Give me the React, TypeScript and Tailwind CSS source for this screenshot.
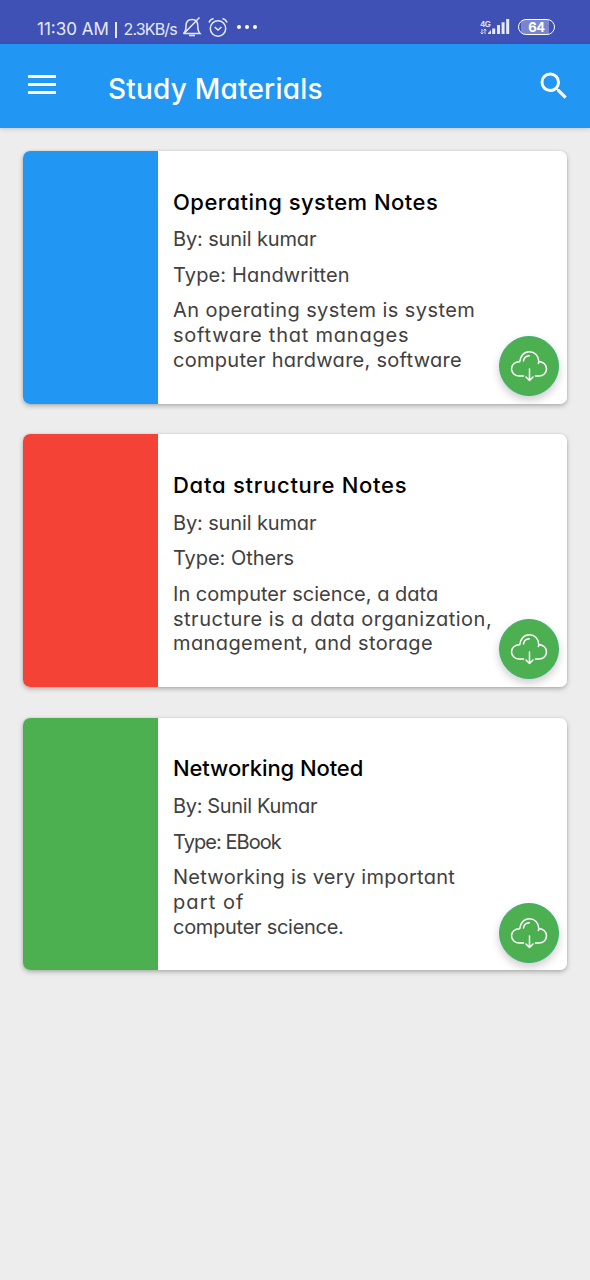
type Line = { text: string; tracking: string };

type Note = {
  title: Line;
  author: Line;
  kind: Line;
  description: Line[];
  color: string;
};

const notes: Note[] = [
  {
    title: { text: 'Operating system Notes', tracking: 'tracking-[0.48px]' },
    author: { text: 'By: sunil kumar', tracking: 'tracking-[-0.13px]' },
    kind: { text: 'Type: Handwritten', tracking: 'tracking-[0.14px]' },
    description: [
      { text: 'An operating system is system', tracking: 'tracking-[0.42px]' },
      { text: 'software that manages', tracking: 'tracking-[0.78px]' },
      { text: 'computer hardware, software', tracking: 'tracking-[0.28px]' },
    ],
    color: 'bg-[#2196f3]',
  },
  {
    title: { text: 'Data structure Notes', tracking: 'tracking-[0.74px]' },
    author: { text: 'By: sunil kumar', tracking: 'tracking-[-0.13px]' },
    kind: { text: 'Type: Others', tracking: 'tracking-[-0.05px]' },
    description: [
      { text: 'In computer science, a data', tracking: 'tracking-[0.02px]' },
      { text: 'structure is a data organization,', tracking: 'tracking-[0.5px]' },
      { text: 'management, and storage', tracking: 'tracking-[0.4px]' },
    ],
    color: 'bg-[#f44336]',
  },
  {
    title: { text: 'Networking Noted', tracking: 'tracking-[-0.1px]' },
    author: { text: 'By: Sunil Kumar', tracking: 'tracking-[-0.35px]' },
    kind: { text: 'Type: EBook', tracking: 'tracking-[-0.95px]' },
    description: [
      { text: 'Networking is very important', tracking: 'tracking-[0.27px]' },
      { text: 'part of', tracking: 'tracking-[1.1px]' },
      { text: 'computer science.', tracking: 'tracking-[-0.28px]' },
    ],
    color: 'bg-[#4caf50]',
  },
];

function StatusBar() {
  return (
    <div className="flex h-11 shrink-0 bg-[#3f51b5] pl-[37px] text-[#e6eafa]">
      <div className="w-[76px] whitespace-nowrap pt-[17px] text-[17px] leading-6 tracking-[0px]">11:30 AM</div>
      <div className="mt-[22px] ml-[2px] h-[16px] w-[1.5px] bg-[#e6eafa]" />
      <div className="ml-[7px] w-[58px] whitespace-nowrap pt-[17px] text-[16px] leading-6 tracking-[-0.85px]">2.3KB/s</div>
      <svg className="mt-[16px] h-[22px] w-[20px] shrink-0" viewBox="0 0 20 22" fill="none" stroke="currentColor" strokeWidth="1.5">
        <path d="M1.5 17.5h16.5c-2-2-2.2-3.5-2.2-7.5 0-4-2.2-6.5-5.8-6.5S4 6 4 10c0 3.5-.4 5.5-2.5 7.5M7 19.6h6M1.5 18 17.5 1.5" />
      </svg>
      <svg className="mt-[16px] ml-[5px] h-[22px] w-[22px] shrink-0" viewBox="0 0 22 22" fill="none" stroke="currentColor" strokeWidth="1.5">
        <circle cx="11" cy="12.5" r="7.7" />
        <path d="M2 6.5Q3 3.5 6.5 2.5M20 6.5Q19 3.5 15.5 2.5M7.7 11l3.3 3 3.5-3" />
      </svg>
      <div className="mt-[25px] ml-[8px] flex gap-[4px]">
        <i className="size-[4px] rounded-full bg-white" />
        <i className="size-[4px] rounded-full bg-white" />
        <i className="size-[4px] rounded-full bg-white" />
      </div>
      <div className="mt-[20px] mr-[8px] ml-auto flex">
        <div className="w-[8px] text-[8px] leading-[8px] font-semibold">
          <span className="block leading-[8px] tracking-[-0.5px]">4G</span>
          <svg className="h-[7px] w-[8px]" viewBox="0 0 8 7" fill="none" stroke="currentColor">
            <path d="M2 1v5M.5 4.5 2 6l1.5-1.5M5 6V1M3.5 2.5 5 1l1.5 1.5" strokeWidth=".9" />
          </svg>
        </div>
        <svg className="-mt-[1px] h-[15px] w-[22px]" viewBox="0 0 22 15" fill="currentColor">
          <path d="M-1 15l4-4v4zM4.2 9.5h3V15h-3zM9 6h3v9h-3zM13.6 3.2h3V15h-3zM18.2 0h3v15h-3z" />
        </svg>
      </div>
      <div className="mt-[19px] mr-[35px] flex h-[16px] w-[37px] items-center justify-center rounded-full border-[1.5px] border-white bg-[linear-gradient(90deg,#3f51b5_0_5%,#7986cb_5%_85%,#3f51b5_85%)] pt-px text-[13px] font-bold tracking-[-0.4px] text-white">
        64
      </div>
    </div>
  );
}

function AppBar() {
  return (
    <header className="flex h-[84px] shrink-0 bg-[#2196f3] text-white shadow-[0_1px_4px_rgba(0,0,0,0.18)]">
      <div className="mt-[31px] ml-[28px] flex w-[28px] flex-col gap-[5px]">
        <i className="h-[3px] bg-white" />
        <i className="h-[3px] bg-white" />
        <i className="h-[3px] bg-white" />
      </div>
      <h1 className="mt-[29px] ml-[52px] text-[28px] leading-[32px] font-medium whitespace-nowrap tracking-[0.2px]">Study Materials</h1>
      <svg className="mt-[24px] mr-[18px] ml-auto size-[36px]" viewBox="0 0 24 24" fill="currentColor">
        <path d="M15.5 14h-.79l-.28-.27A6.47 6.47 0 0 0 16 9.5 6.5 6.5 0 1 0 9.5 16c1.61 0 3.09-.59 4.23-1.57l.27.28v.79l5 4.99L20.49 19l-4.99-5zm-6 0C7.01 14 5 11.99 5 9.5S7.01 5 9.5 5 14 7.01 14 9.5 11.99 14 9.5 14z" />
      </svg>
    </header>
  );
}

function DownloadButton() {
  return (
    <button
      aria-label="Download"
      className="absolute right-[8px] bottom-[7.4px] flex size-[60px] items-center justify-center rounded-full border border-[#3fad78] bg-[#4caf50] shadow-[0_4px_9px_rgba(0,0,0,0.2)]"
    >
      <svg className="h-[32px] w-[38px]" viewBox="0 0 38 32" fill="none" stroke="white" strokeWidth="1.5" strokeLinecap="round" strokeLinejoin="round">
        <path d="M13.5 26H9.5C5 26 1.5 23 1.5 18.8c0-4 3.4-7.2 8.2-7C10.2 6 14 1.8 19.3 1.8c5.5 0 9.3 4 9.5 9.7 4.5.3 7.7 3.4 7.7 7.3 0 4.2-3.2 7.2-7.5 7.2h-3.5M13.5 11c.3-3 2.5-5 5.8-5.2M28.8 11.5c0 1-.1 1.5-.5 2M19.5 19v11.5M16 27l3.5 3.5L23 27" />
      </svg>
    </button>
  );
}

function NoteCard({ note }: { note: Note }) {
  return (
    <article className="relative flex h-[252.5px] overflow-hidden rounded-[7px] bg-white">
      <div className={`w-[135px] shrink-0 ${note.color}`} />
      <div className="pt-[37.8px] pl-[15px] text-[20px] leading-6 whitespace-nowrap text-[#404040]">
        <h2 className={`text-[22px] leading-[26px] font-medium text-black ${note.title.tracking}`}>{note.title.text}</h2>
        <p className={`mt-[12.5px] ${note.author.tracking}`}>{note.author.text}</p>
        <p className={`mt-[11.7px] ${note.kind.tracking}`}>{note.kind.text}</p>
        <div className="mt-[11.5px] leading-[24.75px]">
          {note.description.map((line) => (
            <p key={line.text} className={line.tracking}>{line.text}</p>
          ))}
        </div>
      </div>
      <DownloadButton />
    </article>
  );
}

export default function App() {
  return (
    <div className="flex h-[1280px] w-[590px] flex-col bg-[#ededed] font-['Inter',sans-serif] [font-feature-settings:'cv11']">
      <StatusBar />
      <AppBar />
      <main className="flex flex-col gap-[30.85px] px-[23px] pt-[23px]">
        {notes.map((note) => (
          <div key={note.title.text} className="rounded-[7px] shadow-[0_2px_5px_rgba(0,0,0,0.26),0_0_2px_rgba(0,0,0,0.12)]">
            <NoteCard note={note} />
          </div>
        ))}
      </main>
    </div>
  );
}
